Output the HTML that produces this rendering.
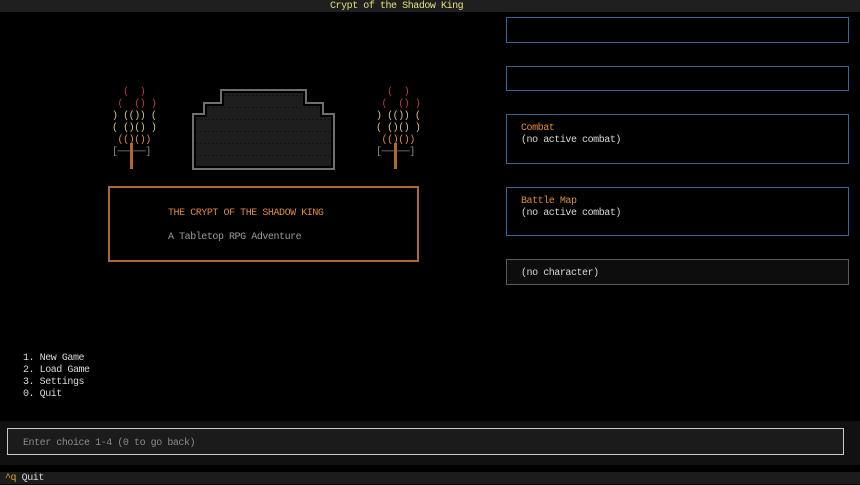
<!DOCTYPE html>
<html><head><meta charset="utf-8"><style>
*{margin:0;padding:0;box-sizing:border-box}
body{width:860px;height:484px;background:#000;position:relative;overflow:hidden;font-family:"Liberation Mono","DejaVu Sans Mono",monospace;font-size:10px;letter-spacing:-0.45px;line-height:12px;color:#d8d8d8}
.a{position:absolute;white-space:pre}
.box{position:absolute;border:1px solid #2b6a9a}
.or{color:#e08a3c}
.r{color:#c8364e}.y{color:#d8c878}.o{color:#e08a3c}.g{color:#888}
</style></head><body>
<div class="a" style="left:0;top:0;width:860px;height:12px;background:#1f1f1f"></div>
<div class="a" style="left:330px;top:1px;color:#e4e07a">Crypt of the Shadow King</div>

<div class="a" style="left:112px;top:87px"><span class="r">  (  )</span>
<span class="r"> (  () )</span>
<span class="y">) (()) (</span>
<span class="y">( ()() )</span>
<span class="o"> (()())</span>
<span class="g">[──┼──]</span></div>
<div class="a" style="left:130px;top:143px;width:3px;height:26px;background:#b06830"></div>
<div class="a" style="left:376px;top:87px"><span class="r">  (  )</span>
<span class="r"> (  () )</span>
<span class="y">) (()) (</span>
<span class="y">( ()() )</span>
<span class="o"> (()())</span>
<span class="g">[──┼──]</span></div>
<div class="a" style="left:394px;top:143px;width:3px;height:26px;background:#b06830"></div>

<svg class="a" style="left:0;top:0" width="860" height="200">
<defs><pattern id="h" width="4" height="12" patternUnits="userSpaceOnUse"><rect width="4" height="12" fill="#1e1e1e"/><rect y="11" width="2" height="1" fill="#111"/></pattern></defs>
<polygon points="221,90 306,90 306,103 323,103 323,114 334,114 334,169 193,169 193,114 204,114 204,103 221,103" fill="#000" stroke="#707070" stroke-width="2"/>
<polygon points="224,93 303,93 303,106 320,106 320,117 331,117 331,166 196,166 196,117 207,117 207,106 224,106" fill="url(#h)"/>
</svg>

<div class="a" style="left:108px;top:186px;width:311px;height:76px;border:2px solid #b06830"></div>
<div class="a or" style="left:168px;top:208px">THE CRYPT OF THE SHADOW KING</div>
<div class="a" style="left:168px;top:232px;color:#9a9a9a">A Tabletop RPG Adventure</div>

<div class="box" style="left:506px;top:17px;width:343px;height:26px"></div>
<div class="box" style="left:506px;top:66px;width:343px;height:25px"></div>
<div class="box" style="left:506px;top:114px;width:343px;height:50px"></div>
<div class="a or" style="left:521px;top:123px">Combat</div>
<div class="a" style="left:521px;top:135px">(no active combat)</div>
<div class="box" style="left:506px;top:187px;width:343px;height:49px"></div>
<div class="a or" style="left:521px;top:196px">Battle Map</div>
<div class="a" style="left:521px;top:208px">(no active combat)</div>
<div class="a" style="left:506px;top:259px;width:343px;height:26px;border:1px solid #5a5a5a;background:#0d0d0d"></div>
<div class="a" style="left:521px;top:268px">(no character)</div>

<div class="a" style="left:23px;top:353px">1. New Game
2. Load Game
3. Settings
0. Quit</div>

<div class="a" style="left:0;top:421px;width:860px;height:44px;background:#111"></div>
<div class="a" style="left:7px;top:428px;width:837px;height:27px;border:1px solid #c8c8c8;background:#1b1b1b"></div>
<div class="a" style="left:23px;top:438px;color:#8a8a8a">Enter choice 1-4 (0 to go back)</div>

<div class="a" style="left:0;top:472px;width:860px;height:12px;background:#1c1c1c"></div>
<div class="a" style="left:5px;top:473px"><span style="color:#e0a030">^q</span> Quit</div>
</body></html>
